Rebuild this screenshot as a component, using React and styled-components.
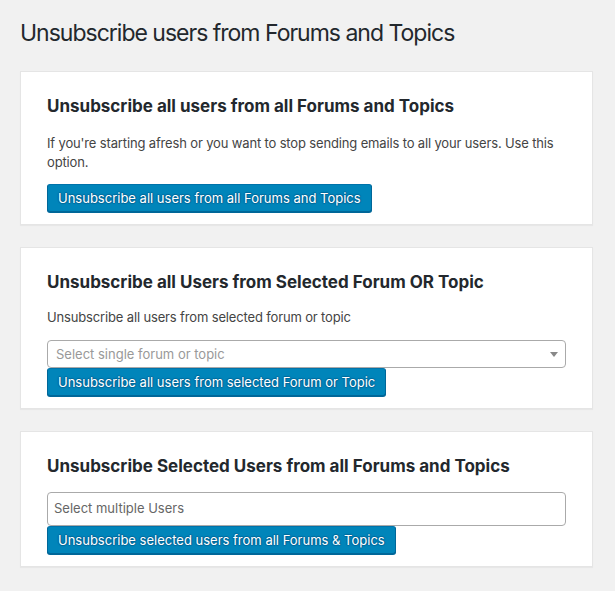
import React from "react";
import styled, { createGlobalStyle } from "styled-components";

const GlobalStyle = createGlobalStyle`
  body {
    margin: 0;
    background: #f1f1f1;
    font-family: Inter, "Liberation Sans", sans-serif;
    color: #444;
  }
`;

const Page = styled.div`
  padding: 0 22px 20px 20px;
  display: flex;
  flex-direction: column;
`;

const Title = styled.h1`
  margin: 19px 0 23px;
  font-size: 23px;
  line-height: 29px;
  font-weight: 400;
  letter-spacing: -1px;
  color: #23282d;
`;

const Card = styled.section`
  background: #fff;
  border: 1px solid #e5e5e5;
  box-shadow: 0 1px 1px rgba(0, 0, 0, 0.04);
  padding: 22px 26px 12px;
  display: flex;
  flex-direction: column;
  & + & {
    margin-top: 22px;
  }
`;

const Heading = styled.h2`
  margin: 0;
  font-size: 17px;
  line-height: 24px;
  font-weight: 700;
  color: #23282d;
`;

const Text = styled.p`
  margin: ${(p) => p.$top || 16}px 0 0;
  font-size: 13px;
  line-height: 19px;
  letter-spacing: -0.15px;
  color: #444;
`;

const Button = styled.button`
  align-self: flex-start;
  margin-top: ${(p) => p.$top || 0}px;
  height: 28px;
  padding: 0 10px 1px;
  font-family: inherit;
  font-size: 13px;
  line-height: 26px;
  color: #fff;
  background: #0085ba;
  border: 1px solid #0073aa;
  border-color: #0073aa #006799 #006799;
  border-radius: 3px;
  box-shadow: 0 1px 0 #006799;
  text-shadow: 0 -1px 1px #006799, 1px 0 1px #006799, 0 1px 1px #006799,
    -1px 0 1px #006799;
  white-space: nowrap;
  cursor: pointer;
`;

const SelectBox = styled.div`
  position: relative;
  margin-top: 13px;
  height: 28px;
  box-sizing: border-box;
  border: 1px solid #aaa;
  border-radius: 4px;
  padding: 0 24px 0 8px;
  font-size: 13px;
  line-height: 26px;
  color: #999;
  &::after {
    content: "";
    position: absolute;
    right: 7px;
    top: 11px;
    border-style: solid;
    border-width: 5px 4px 0;
    border-color: #888 transparent transparent;
  }
`;

const MultiBox = styled.div`
  margin-top: 14px;
  height: 34px;
  box-sizing: border-box;
  border: 1px solid #aaa;
  border-radius: 4px;
  padding: 4px 6px 0;
  font-size: 13px;
  line-height: 22px;
  color: #666;
`;

export default function App() {
  return (
    <>
      <GlobalStyle />
      <Page>
        <Title>Unsubscribe users from Forums and Topics</Title>

        <Card>
          <Heading>Unsubscribe all users from all Forums and Topics</Heading>
          <Text $top={16}>
            If you're starting afresh or you want to stop sending emails to all
            your users. Use this option.
          </Text>
          <Button $top={12}>Unsubscribe all users from all Forums and Topics</Button>
        </Card>

        <Card>
          <Heading>Unsubscribe all Users from Selected Forum OR Topic</Heading>
          <Text $top={14}>Unsubscribe all users from selected forum or topic</Text>
          <SelectBox>Select single forum or topic</SelectBox>
          <Button>Unsubscribe all users from selected Forum or Topic</Button>
        </Card>

        <Card>
          <Heading>Unsubscribe Selected Users from all Forums and Topics</Heading>
          <MultiBox>Select multiple Users</MultiBox>
          <Button>Unsubscribe selected users from all Forums &amp; Topics</Button>
        </Card>
      </Page>
    </>
  );
}
